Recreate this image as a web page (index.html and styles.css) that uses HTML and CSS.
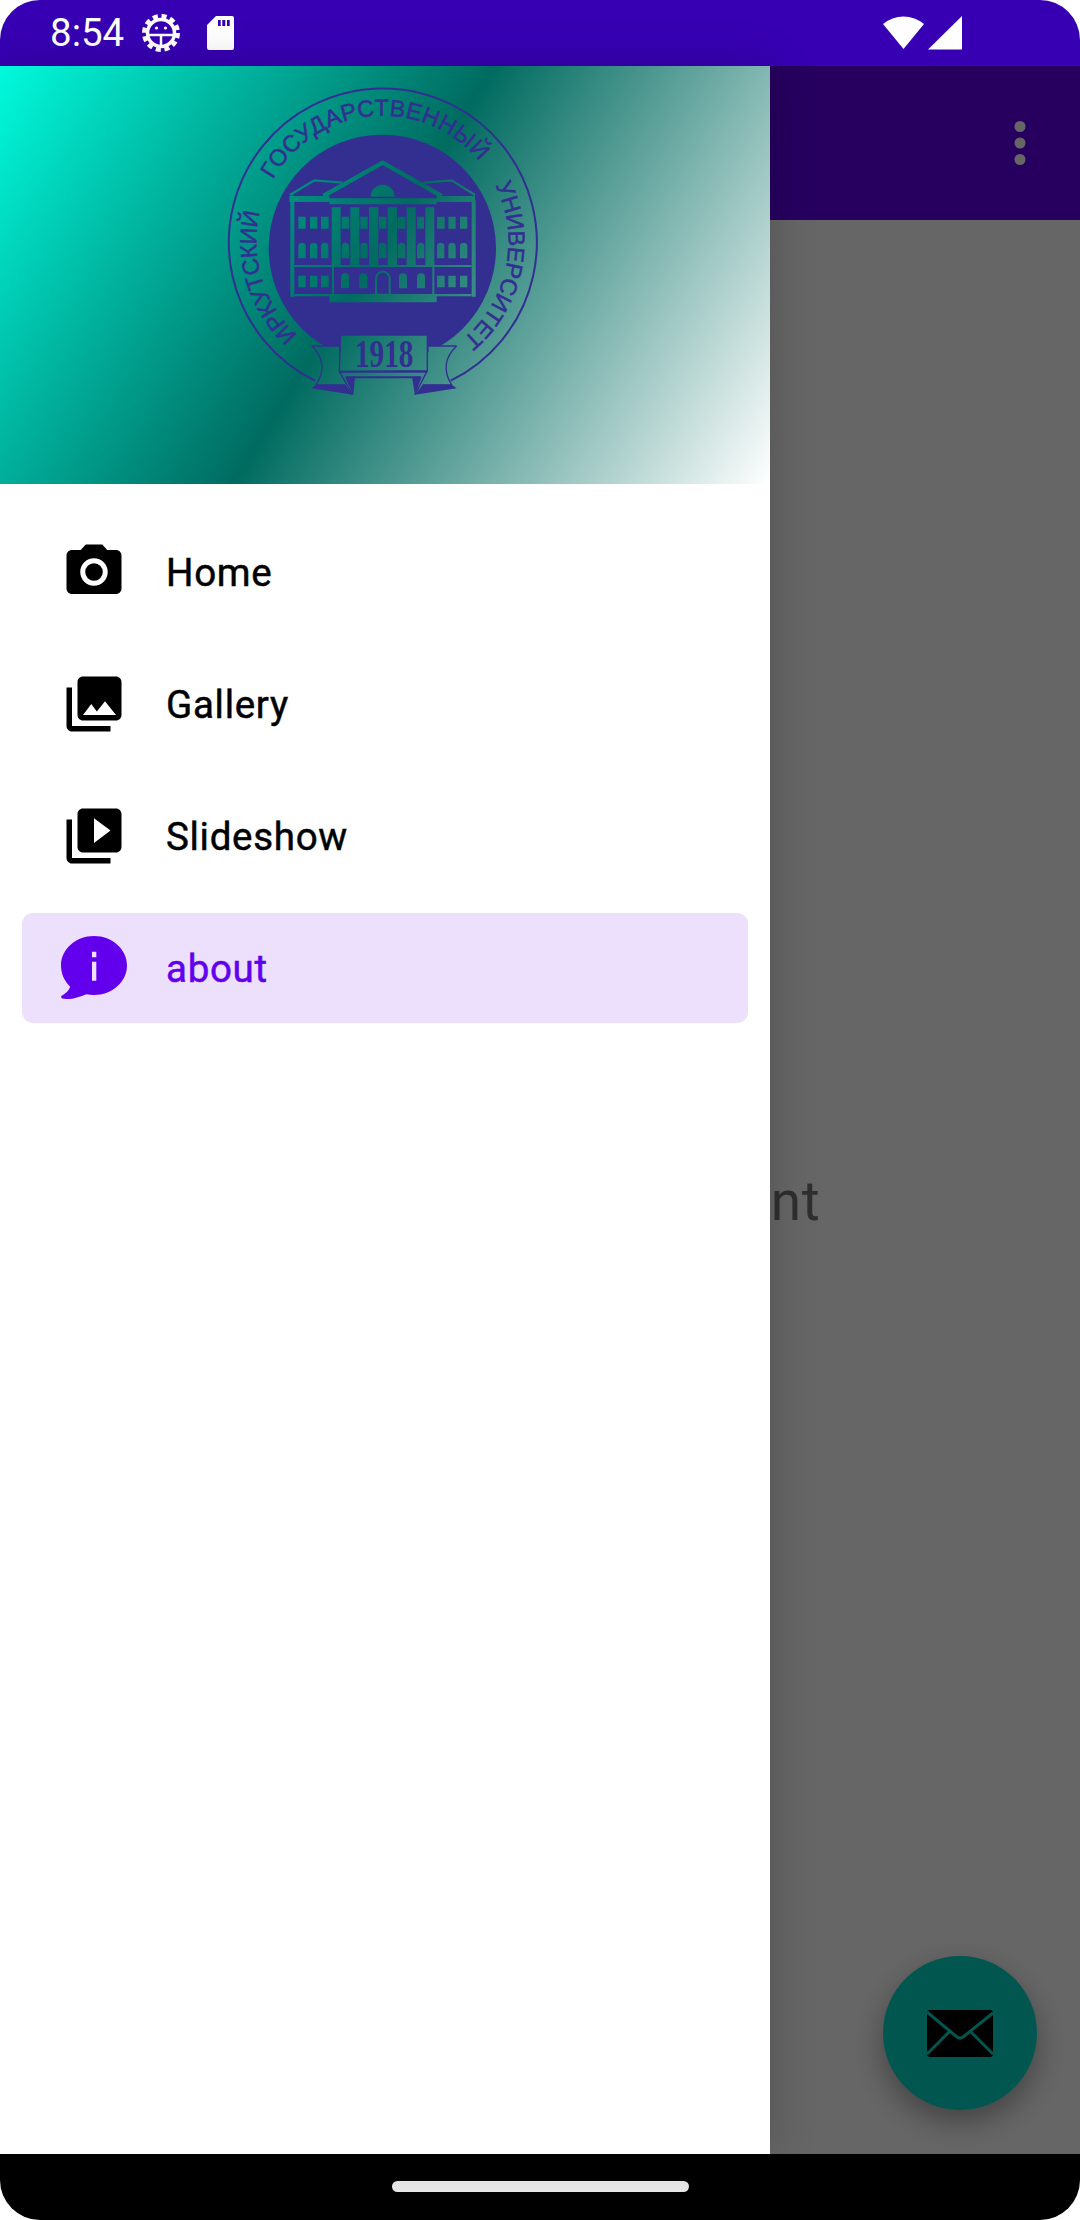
FILE: index.html
```html
<!DOCTYPE html>
<html>
<head>
<meta charset="utf-8">
<title>Drawer</title>
<link rel="stylesheet" href="styles.css">
</head>
<body>

<div class="screen">

  <div class="status-bar">
    <span class="clock">8:54</span>
    <svg class="adb-icon" width="38" height="38" viewBox="0 0 38 38">
      <circle class="gear-teeth" cx="19" cy="19" r="16.5"/>
      <circle class="gear-ring" cx="19" cy="19" r="13.5"/>
      <path class="gear-bug" d="M6 21H32M19 21V32"/>
      <circle class="gear-eye" cx="14.5" cy="14" r="1.6"/>
      <circle class="gear-eye" cx="23.5" cy="14" r="1.6"/>
    </svg>
    <svg class="sd-icon" width="27" height="34" viewBox="0 0 27 34">
      <path fill-rule="evenodd" d="M9 0H25a2 2 0 0 1 2 2V32a2 2 0 0 1-2 2H2a2 2 0 0 1-2-2V9zM11 4V10h2.700V4zM15.300 4V10h3V4zM20 4V10h2.700V4z"/>
    </svg>
    <span class="status-spacer"></span>
    <svg class="wifi-icon" width="41" height="34" viewBox="0 0 41 34">
      <path d="M20.500 34L0 9A32 32 0 0 1 41 9z"/>
    </svg>
    <svg class="signal-icon" width="34" height="34" viewBox="0 0 34 34">
      <path d="M0 33.500L34 0V33.500z"/>
    </svg>
  </div>

  <div class="app">
    <div class="app-bar">
      <svg width="66" height="66" viewBox="0 0 24 24">
        <circle cx="12" cy="6" r="2"/><circle cx="12" cy="12" r="2"/><circle cx="12" cy="18" r="2"/>
      </svg>
    </div>

    <div class="content">
      <div class="fragment-text">This is home fragment</div>
    </div>

    <div class="fab">
      <svg width="66" height="47" viewBox="0 0 66 47">
        <rect width="66" height="47" rx="3"/>
        <path class="fab-lines" d="M0 2L30 27Q33 29 36 27L66 3M22 22L0 44M44 22L66 44"/>
      </svg>
    </div>

    <div class="scrim"></div>

    <div class="drawer">
      <div class="drawer-header">
        <svg class="logo" width="360" height="340" viewBox="0 0 1080 1020">
          <defs>
            <mask id="disc-holes" maskUnits="userSpaceOnUse" x="0" y="0" width="1080" height="1020">
              <rect width="1080" height="1020" fill="#fff"/>
              <g transform="translate(240 240)">
                <path class="hole-line" d="M130 138L308 38L485 138"/>
                <path class="hole-thin" d="M30 135L103 91L188 98M430 98L515 91L585 135"/>
                <path d="M272 140a36 36 0 0 1 72 0z"/>
                <path d="M28 138H148V145H470V138H585V156H470V163H148V156H28z"/>
                <path d="M31 150h12v290h-12zM575 150h12v290h-12zM44 345H574v6H44zM156 351h6v82h-6zM457 351h6v82h-6zM44 432H574v7H44zM148 439H470v18H148z"/>
                <path d="M155 172h27v173h-27zM211 172h27v173h-27zM267 172h28v173h-28zM323 172h28v173h-28zM380 172h27v173h-27zM436 172h27v173h-27z"/>
                <path d="M55 200h22v36h-22zM90 200h22v36h-22zM123 200h23v36h-23zM185 200h22v36h-22zM241 200h22v36h-22zM297 200h22v36h-22zM354 200h22v36h-22zM411 200h21v36h-21zM471 200h23v36h-23zM505 200h22v36h-22zM540 200h22v36h-22z"/>
                <path d="M55 325v-36a11 11 0 0 1 22 0v36zM90 325v-36a11 11 0 0 1 22 0v36zM123 325v-36a11 11 0 0 1 22 0v36zM185 325v-36a11 11 0 0 1 22 0v36zM241 325v-36a11 11 0 0 1 22 0v36zM297 325v-36a11 11 0 0 1 22 0v36zM354 325v-36a11 11 0 0 1 22 0v36zM411 325v-36a11 11 0 0 1 22 0v36zM471 325v-36a11 11 0 0 1 22 0v36zM505 325v-36a11 11 0 0 1 22 0v36zM540 325v-36a11 11 0 0 1 22 0v36z"/>
                <path d="M55 377h22v35h-22zM90 377h22v35h-22zM123 377h23v35h-23zM471 377h23v35h-23zM505 377h22v35h-22zM540 377h22v35h-22z"/>
                <path d="M183 415v-33a12 12 0 0 1 24 0v33zM238 415v-33a12 12 0 0 1 24 0v33zM357 415v-33a12 12 0 0 1 24 0v33zM411 415v-33a12 12 0 0 1 24 0v33z"/>
                <path class="hole-door" d="M288 434V388a20 23 0 0 1 41 0V434z"/>
              </g>
              <g transform="translate(300 750)">
                <path d="M122 45H382V152L118 155z"/>
                <path d="M35 78H118V155L140 200H48Q90 130 35 78z"/>
                <path d="M470 78H386V155L365 200H455Q415 130 470 78z"/>
              </g>
            </mask>
            <path id="ring-text" d="M293 795A378 378 0 1 1 784 810"/>
          </defs>

          <path class="logo-ring" d="M345 932A462 462 0 1 1 752 932"/>
          <circle class="logo-disc" cx="547" cy="535" r="341" mask="url(#disc-holes)"/>

          <text class="logo-text">
            <textPath href="#ring-text" startOffset="0" textLength="405">ИРКУТСКИЙ</textPath>
          </text>
          <text class="logo-text">
            <textPath href="#ring-text" startOffset="510" textLength="730">ГОСУДАРСТВЕННЫЙ</textPath>
          </text>
          <text class="logo-text">
            <textPath href="#ring-text" startOffset="1326" textLength="510">УНИВЕРСИТЕТ</textPath>
          </text>

          <g transform="translate(300 750)">
            <path class="ribbon-line" d="M122 45H382V152L118 155zM35 78H118M386 78H470M35 78Q90 130 48 195H135M470 78Q415 130 455 195H368"/>
            <path class="ribbon-thick" d="M118 155H382M138 172H362"/>
            <path class="logo-fill" d="M135 170H165L160 226zM34 205L48 194H136L158 224zM365 170H336L345 226zM470 205L455 194H368L345 224z"/>
            <path class="ribbon-line" d="M118 155L158 224M382 152L345 224"/>
          </g>
          <text class="logo-year" x="465" y="892" textLength="175" lengthAdjust="spacingAndGlyphs">1918</text>
        </svg>
      </div>

      <nav class="menu">
        <a class="menu-item">
          <svg width="66" height="66" viewBox="0 0 24 24">
            <path d="M12,12m-3.2,0a3.2,3.2 0,1 1,6.4 0a3.2,3.2 0,1 1,-6.4 0"/>
            <path d="M9,2L7.17,4H4c-1.1,0 -2,0.9 -2,2v12c0,1.1 0.9,2 2,2h16c1.1,0 2,-0.9 2,-2V6c0,-1.1 -0.9,-2 -2,-2h-3.17L15,2H9zM12,17c-2.76,0 -5,-2.24 -5,-5s2.24,-5 5,-5 5,2.24 5,5 -2.24,5 -5,5z"/>
          </svg>
          <span>Home</span>
        </a>
        <a class="menu-item">
          <svg width="66" height="66" viewBox="0 0 24 24">
            <path d="M22,16V4c0,-1.1 -0.9,-2 -2,-2H8c-1.1,0 -2,0.9 -2,2v12c0,1.1 0.9,2 2,2h12c1.1,0 2,-0.9 2,-2zM11,12l2.03,2.71L16,11l4,5H8l3,-4zM2,6v14c0,1.1 0.9,2 2,2h14v-2H4V6H2z"/>
          </svg>
          <span>Gallery</span>
        </a>
        <a class="menu-item">
          <svg width="66" height="66" viewBox="0 0 24 24">
            <path d="M4,6H2v14c0,1.1 0.9,2 2,2h14v-2H4V6zM20,2H8c-1.1,0 -2,0.9 -2,2v12c0,1.1 0.9,2 2,2h12c1.1,0 2,-0.9 2,-2V4c0,-1.1 -0.9,-2 -2,-2zM12,14.5v-9l6,4.5 -6,4.5z"/>
          </svg>
          <span>Slideshow</span>
        </a>
        <a class="menu-item active">
          <svg width="66" height="66" viewBox="0 0 66 66">
            <path fill-rule="evenodd" d="M33 1C51.200 1 66 14.200 66 30.500S51.200 60 33 60C30.500 60 28 59.800 25.700 59.200C19 61.500 11 64.500 5 64C1 63.800-.800 62.500.500 61C4.500 58.500 8 55.500 9.200 51.700C3.500 46.400 0 38.800 0 30.500C0 14.200 14.800 1 33 1zM31 16.700V22.300H35.300V16.700zM31 26.700V45.700H35.300V26.700z"/>
          </svg>
          <span>about</span>
        </a>
      </nav>
    </div>
  </div>

  <div class="nav-bar"><div class="nav-handle"></div></div>

</div>

</body>
</html>
```

FILE: styles.css
```css
body { margin:0; background:#fff; font-family:Roboto, sans-serif; }
.screen { width:1080px; height:2220px; display:flex; flex-direction:column; overflow:hidden; border-radius:40px; }

/* status bar */
.status-bar { height:66px; flex:none; display:flex; align-items:flex-start; background:#3700b3; padding:0 118px 0 50px; box-sizing:border-box; color:#fff; fill:#fff; }
.clock { font-size:38.5px; line-height:66px; margin-right:18px; }
.adb-icon { margin-top:13.500px; margin-right:27px; }
.sd-icon { margin-top:16px; }
.status-spacer { flex:1; }
.wifi-icon { margin-top:15px; margin-right:4px; }
.signal-icon { margin-top:16px; }
.gear-teeth { fill:none; stroke:#fff; stroke-width:5px; stroke-dasharray:5 3.640; }
.gear-ring { fill:none; stroke:#fff; stroke-width:3.500px; }
.gear-bug { fill:none; stroke:#fff; stroke-width:2.500px; }
.gear-eye { fill:#fff; }

/* app under the drawer */
.app { flex:1; position:relative; display:flex; flex-direction:column; background:#fff; }
.app-bar { height:154px; flex:none; display:flex; align-items:center; justify-content:flex-end; padding-right:27px; background:#6200ee; fill:#fff; }
.content { flex:1; display:flex; align-items:center; justify-content:center; padding-top:28px; box-sizing:border-box; }
.fragment-text { font-size:55px; letter-spacing:.5px; color:rgba(0,0,0,.54); }
.fab { position:absolute; right:43px; bottom:44px; width:154px; height:154px; border-radius:50%; background:#03dac5; display:flex; align-items:center; justify-content:center; box-shadow:0 12px 30px rgba(0,0,0,.35); }
.fab-lines { fill:none; stroke:#03dac5; stroke-width:3px; }
.scrim { position:absolute; top:0; right:0; bottom:0; left:0; background:rgba(0,0,0,.6); }

/* drawer */
.drawer { position:absolute; top:0; bottom:0; left:0; width:770px; background:#fff; box-shadow:0 0 44px rgba(0,0,0,.2); }
.drawer-header { height:418px; display:flex; justify-content:center; padding:4px 10px 0 0; box-sizing:border-box; background:linear-gradient(122deg, #00fadc 0%, #006b60 48%, #fff 100%); }
.logo { display:block; }
.logo-ring { fill:none; stroke:#332f91; stroke-width:6px; }
.logo-disc, .logo-fill { fill:#332f91; }
.logo-text { font-family:"Liberation Sans", sans-serif; font-size:70px; fill:#332f91; stroke:#332f91; stroke-width:1.500px; }
.logo-year { font-family:"Liberation Serif", serif; font-weight:bold; font-size:120px; fill:#332f91; }
.hole-line { fill:none; stroke:#000; stroke-width:13px; }
.hole-thin { fill:none; stroke:#000; stroke-width:7px; }
.hole-door { fill:none; stroke:#000; stroke-width:6px; }
.ribbon-line { fill:none; stroke:#332f91; stroke-width:4px; }
.ribbon-thick { fill:none; stroke:#332f91; stroke-width:6px; }

.menu { display:flex; flex-direction:column; gap:22px; padding:33px 22px; }
.menu-item { height:110px; display:flex; align-items:center; gap:39px; padding-left:39px; border-radius:11px; font-size:38.500px; font-weight:400; letter-spacing:.7px; -webkit-text-stroke:.5px currentColor; color:#000; fill:#000; }
.menu-item span { padding-top:1px; }
.menu-item.active { background:#ede0fd; color:#6200ee; fill:#6200ee; }

/* nav bar */
.nav-bar { height:66px; flex:none; display:flex; align-items:center; justify-content:center; background:#000; }
.nav-handle { width:297px; height:11px; border-radius:6px; background:#e8e8e8; margin-top:-1px; }
```
